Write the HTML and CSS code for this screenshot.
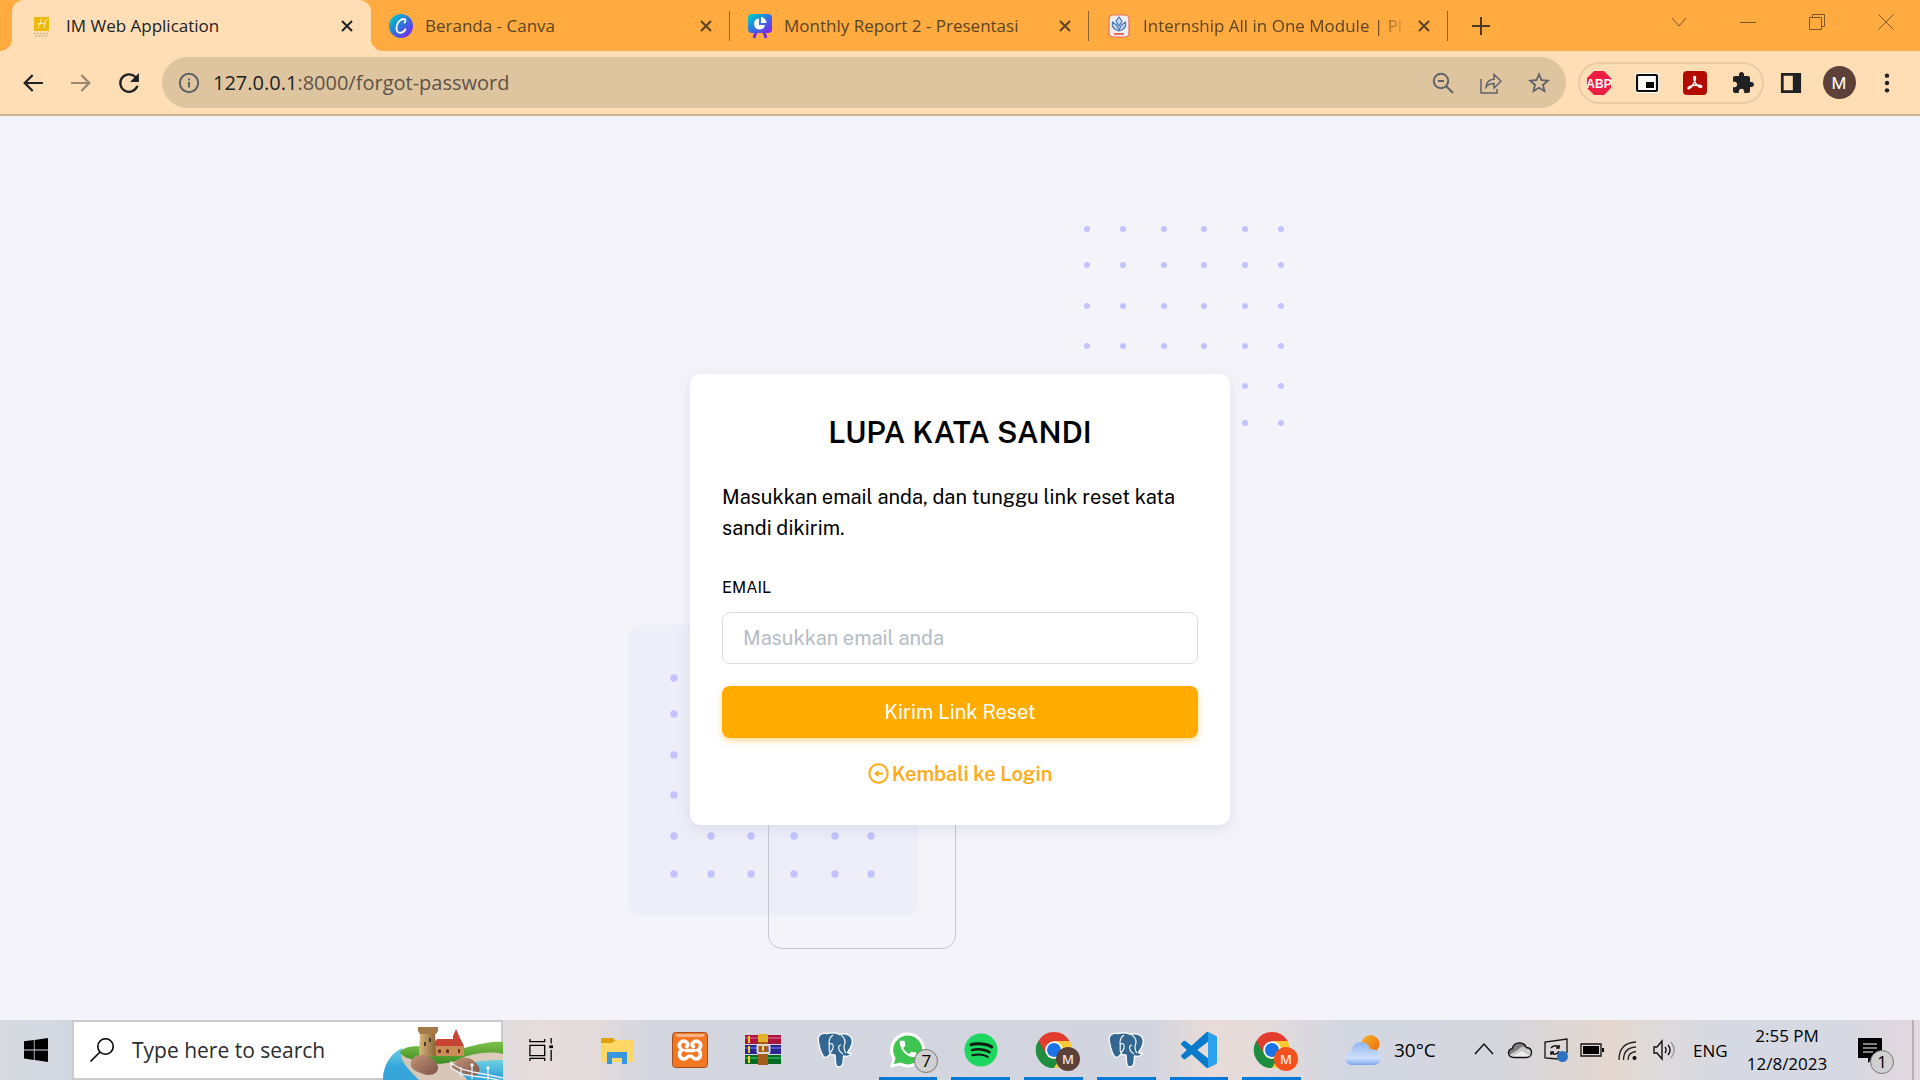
FILE: index.html
```html
<!DOCTYPE html>
<html lang="id">
<head>
<meta charset="utf-8">
<meta name="viewport" content="width=device-width, initial-scale=1">
<title>IM Web Application</title>
<link rel="stylesheet" href="styles.css">
</head>
<body>
<header class="browser">
  <div class="tabstrip">
    <div class="tab tab-active">
      <svg class="favicon" viewBox="0 0 24 24"><rect x="4" y="3" width="15" height="14" fill="#edb90b"/><path d="M8 14c2-3 3-6 3-9M14 14c0-3 1-7 3-9M7 10c3 0 6-1 9-1" fill="none" stroke="#fff0b8" stroke-width="1"/><path d="M4 19.500h15M5 22h13" stroke="#cdb994" stroke-width="1.500" stroke-dasharray="2 1"/></svg>
      <span class="tab-title">IM Web Application</span>
      <button class="tab-close" aria-label="Close"><svg viewBox="0 0 12 12"><path d="M1 1l10 10M11 1L1 11"/></svg></button>
    </div>
    <div class="tab tab-line">
      <svg class="favicon" viewBox="0 0 24 24"><defs><linearGradient id="cv" x1="0" y1="0" x2="1" y2="1"><stop offset=".1" stop-color="#00c4cc"/><stop offset=".5" stop-color="#2f73e0"/><stop offset=".9" stop-color="#7d2ae8"/></linearGradient></defs><circle cx="12" cy="12" r="12" fill="url(#cv)"/><path d="M15.500 8.700c1.600-1.500 1.300-3.700-.8-3.700C11 5 7.500 9.500 7.500 14c0 3 1.500 4.800 3.700 4.800 2.400 0 4.300-1.700 5.300-3.500" fill="none" stroke="#fff" stroke-width="1.800" stroke-linecap="round"/></svg>
      <span class="tab-title">Beranda - Canva</span>
      <button class="tab-close" aria-label="Close"><svg viewBox="0 0 12 12"><path d="M1 1l10 10M11 1L1 11"/></svg></button>
    </div>
    <div class="tab tab-line">
      <svg class="favicon" viewBox="0 0 24 24"><path d="M8 18l-2 6M16 18l2 6" stroke="#7d2ae8" stroke-width="3"/><rect width="24" height="19" rx="4" fill="url(#cv)"/><path d="M11 4.500a5.500 5.500 0 1 0 6 6.500h-6z" fill="#fff"/><path d="M13 3a6 6 0 0 1 5.500 6H13z" fill="#fff"/></svg>
      <span class="tab-title">Monthly Report 2 - Presentasi</span>
      <button class="tab-close" aria-label="Close"><svg viewBox="0 0 12 12"><path d="M1 1l10 10M11 1L1 11"/></svg></button>
    </div>
    <div class="tab tab-line">
      <svg class="favicon" viewBox="0 0 24 24"><rect x="2" y="1" width="20" height="22" rx="4" fill="#f5eef0" stroke="#ea6a5a" stroke-width="1.200"/><path d="M12 3l3 4-3 5-3-5zM5.500 8c-1 5 2 8 6.500 9 4.500-1 7.500-4 6.500-9l-4 3-2.500 5-2.500-5z" fill="#c4d7ee" stroke="#4d7cb8" stroke-width="1.200"/><path d="M7 20h10" stroke="#e0614f" stroke-width="1.800"/></svg>
      <span class="tab-title tab-fade">Internship All in One Module | Pl</span>
      <button class="tab-close" aria-label="Close"><svg viewBox="0 0 12 12"><path d="M1 1l10 10M11 1L1 11"/></svg></button>
    </div>
    <button class="tab-new" aria-label="New tab"><svg viewBox="0 0 18 18"><path d="M9 0v18M0 9h18"/></svg></button>
    <div class="window-controls">
      <button aria-label="Search tabs"><svg viewBox="0 0 16 16"><path d="M1 4l7 8 7-8"/></svg></button>
      <button aria-label="Minimize"><svg viewBox="0 0 16 16"><path d="M0 8.500h16"/></svg></button>
      <button aria-label="Restore"><svg viewBox="0 0 16 16"><path d="M.5 3.500h12v12H.5zM3.500 3.500v-3h12v12h-3"/></svg></button>
      <button aria-label="Close window"><svg viewBox="0 0 16 16"><path d="M.5.5l15 15M15.500.5l-15 15"/></svg></button>
    </div>
  </div>

  <nav class="toolbar">
    <button class="tool" aria-label="Back"><svg viewBox="2 2 20 20"><path d="M21 11H6.830l5.590-5.590L11 4l-8 8 8 8 1.410-1.410L6.830 13H21z" fill="#202124"/></svg></button>
    <button class="tool" aria-label="Forward"><svg viewBox="2 2 20 20"><path d="M3 11h14.170l-5.590-5.590L13 4l8 8-8 8-1.410-1.410L17.170 13H3z" fill="#9b8871"/></svg></button>
    <button class="tool" aria-label="Reload"><svg viewBox="2 2 20 20"><path d="M18.360 5.640A9 9 0 1 0 20.700 14.500h-2.200A6.900 6.900 0 1 1 16.900 7.100L13 11h8V3z" fill="#202124"/></svg></button>
    <div class="omnibox">
      <svg class="omni-info" viewBox="0 0 24 24"><circle cx="12" cy="12" r="10" fill="none" stroke="#5c5f63" stroke-width="2.200"/><path d="M12 11v6M12 7v2.200" stroke="#5c5f63" stroke-width="2.200"/></svg>
      <p class="omni-url"><span class="omni-host">127.0.0.1</span>:8000/forgot-password</p>
      <button class="tool" aria-label="Zoom"><svg viewBox="1 1 22 22"><g fill="none" stroke="#5f6368" stroke-width="2"><circle cx="10" cy="10" r="7.200"/><path d="M7 10h6M15 15l7 7"/></g></svg></button>
      <button class="tool" aria-label="Share"><svg viewBox="1 1 22 22"><path d="M2 8v14h16v-4M7 16c.5-5 3-7.500 8-7.800V3.500l7 6.800-7 6.700v-4.500c-3.500 0-6 1-8 3.500z" fill="none" stroke="#5f6368" stroke-width="1.500"/></svg></button>
      <button class="tool" aria-label="Bookmark"><svg viewBox="2 2 20 20"><path d="M22 9.240l-7.190-.62L12 2 9.190 8.630 2 9.240l5.460 4.730L5.820 21 12 17.270 18.180 21l-1.630-7.030zM12 15.400l-3.760 2.270 1-4.280-3.320-2.880 4.380-.38L12 6.100l1.710 4.040 4.380.38-3.320 2.880 1 4.280z" fill="#5f6368"/></svg></button>
    </div>
    <div class="extensions">
      <button class="ext" aria-label="Adblock"><svg viewBox="0 0 24 24"><path d="M7 0h10l7 7v10l-7 7H7l-7-7V7z" fill="#ee1d43"/><text x="12" y="16.500" class="ext-abp">ABP</text></svg></button>
      <button class="ext" aria-label="Picture in picture"><svg viewBox="0 0 24 24"><rect x="0" y="2" width="24" height="20" rx="3" fill="#fff"/><rect x="2" y="4" width="20" height="16" rx="1" fill="#fff" stroke="#0b0d0f" stroke-width="2.200"/><path d="M11 11h8v6h-8z" fill="#000"/></svg></button>
      <button class="ext" aria-label="PDF"><svg viewBox="0 0 24 24"><rect width="24" height="24" rx="4" fill="#b30b00"/><path d="M11.500 5.500c2 0 .8 5-1.800 8.500-2 2.800-4.200 4.600-4.700 3.500-.6-1.500 5-3.500 9-3.500 3.400 0 5 .8 4.700 1.800-.5 1.500-3.500-.3-5.200-2.300-2.500-3-3.500-8-2-8z" fill="none" stroke="#fff" stroke-width="1.500"/></svg></button>
      <button class="ext" aria-label="Extensions"><svg viewBox="0 0 24 24"><path d="M20.500 11H19V7c0-1.100-.9-2-2-2h-4V3.500C13 2.120 11.880 1 10.500 1S8 2.120 8 3.500V5H4c-1.100 0-1.990.9-1.990 2v3.800H3.500c1.490 0 2.700 1.210 2.700 2.700s-1.210 2.700-2.700 2.700H2V20c0 1.100.9 2 2 2h3.800v-1.500c0-1.490 1.210-2.700 2.700-2.700s2.700 1.210 2.700 2.700V22H17c1.100 0 2-.9 2-2v-4h1.500c1.380 0 2.500-1.120 2.500-2.500S21.880 11 20.500 11z" fill="#202124"/></svg></button>
    </div>
    <div class="toolbar-end">
      <button class="tool" aria-label="Side panel"><svg viewBox="0 0 24 24"><path d="M2.500 2.500h19v19h-19z" fill="none" stroke="#202124" stroke-width="3"/><path d="M14 2h8v20h-8z" fill="#202124"/></svg></button>
      <button class="tool" aria-label="Profile"><span class="avatar">M</span></button>
      <button class="tool" aria-label="Menu"><svg viewBox="0 0 24 24"><g fill="#202124"><circle cx="12" cy="4" r="2.400"/><circle cx="12" cy="12" r="2.400"/><circle cx="12" cy="20" r="2.400"/></g></svg></button>
    </div>
  </nav>
</header>

<main class="page">
  <div class="auth">
    <svg class="dots-top" viewBox="0 0 204 204"><defs><g id="row"><circle cx="5" cy="5" r="3"/><circle cx="41" cy="5" r="3"/><circle cx="82" cy="5" r="3"/><circle cx="122" cy="5" r="3"/><circle cx="163" cy="5" r="3"/><circle cx="199" cy="5" r="3"/></g></defs><g fill="#c3c2ff"><use href="#row"/><use href="#row" y="36"/><use href="#row" y="77"/><use href="#row" y="117"/><use href="#row" y="157"/><use href="#row" y="194"/></g></svg>
    <div class="shape-fill">
      <svg class="dots-bottom" viewBox="0 0 208 208"><defs><g id="row-lg"><circle cx="5" cy="5" r="3.700"/><circle cx="42" cy="5" r="3.700"/><circle cx="82" cy="5" r="3.700"/><circle cx="125" cy="5" r="3.700"/><circle cx="166" cy="5" r="3.700"/><circle cx="202" cy="5" r="3.700"/></g></defs><g fill="#c3c2ff"><use href="#row-lg"/><use href="#row-lg" y="36"/><use href="#row-lg" y="77"/><use href="#row-lg" y="117"/><use href="#row-lg" y="158"/><use href="#row-lg" y="196"/></g></svg>
    </div>
    <div class="shape-outline"></div>
    <form class="card">
      <h1 class="card-title">LUPA KATA SANDI</h1>
      <p class="card-text">Masukkan email anda, dan tunggu link reset kata sandi dikirim.</p>
      <label class="field-label" for="email">EMAIL</label>
      <input class="field" id="email" type="email" placeholder="Masukkan email anda">
      <button class="submit" type="button">Kirim Link Reset</button>
      <a class="back-link" href="#"><svg viewBox="0 0 24 24"><circle cx="12" cy="12" r="10.500" fill="none" stroke="#ffab1a" stroke-width="2.300"/><path d="M7 12l5-4v3h5v2h-5v3z" fill="#ffa500"/></svg>Kembali ke Login</a>
    </form>
  </div>
</main>

<footer class="taskbar">
  <button class="start" aria-label="Start"><svg viewBox="0 0 24 24"><path d="M0 3.300l9.800-1.300v9.500H0zM10.600 1.900L24 0v11.500H10.600zM0 12.400h9.800v9.500L0 20.600zM10.600 12.400H24V24l-13.400-1.900z"/></svg></button>
  <label class="search">
    <svg class="search-icon" viewBox="0 0 24 24"><g fill="none" stroke="#000" stroke-width="1.600"><circle cx="15.500" cy="8.500" r="7.700"/><path d="M10 14L.5 23.500"/></g></svg>
    <input class="search-input" type="text" placeholder="Type here to search">
    <svg class="search-art" viewBox="0 0 120 56">
      <defs>
        <linearGradient id="gr" x1="0" y1="0" x2="0" y2="1"><stop offset="0" stop-color="#7cc24a"/><stop offset="1" stop-color="#3f8a22"/></linearGradient>
        <linearGradient id="sea" x1="0" y1="0" x2="0" y2="1"><stop offset="0" stop-color="#6fd0e0"/><stop offset=".6" stop-color="#35a5da"/></linearGradient>
        <linearGradient id="tw" x1="0" y1="0" x2="1" y2="0"><stop offset="0" stop-color="#d9b87c"/><stop offset="1" stop-color="#8a6338"/></linearGradient>
        <linearGradient id="rk" x1="0" y1="0" x2="1" y2="1"><stop offset="0" stop-color="#c59478"/><stop offset="1" stop-color="#7c5448"/></linearGradient>
      </defs>
      <path d="M0 56C0 42 8 28 24 24h96v32z" fill="#d8c6b6"/>
      <path d="M0 56C0 42 8 28 20 24c-6 10 4 20 16 32z" fill="url(#sea)"/>
      <g transform="translate(0 7)">
        <path d="M17 21c6-7 20-7 38-3 14 3 22 0 34-3s22-5 31-4v12c-24-1-36 3-50 8-14 3-22 2-34-1-10-2-17-4-19-9z" fill="url(#gr)"/>
        <path d="M76 28c14-6 30-8 44-5v7c-14 0-26 2-38 2z" fill="#dccbbb"/>
        <path d="M74 36c14-6 30-7 46-7v27H90z" fill="url(#sea)"/>
        <path d="M50 15h31v10H50z" fill="#c98d56"/>
        <path d="M49 15l5-7h16v-3l3-7 4 9 4 8z" fill="#c94335"/>
        <path d="M55 22v-3a2 2 0 0 1 3 0v3zM63 22v-3a2 2 0 0 1 3 0v3zM75 22v-4h2v4z" fill="#6b3325"/>
        <path d="M37 2h15l1 23H36z" fill="url(#tw)"/><path d="M35-4h20v4l-2 3H37l-2-3z" fill="#a37a48"/><path d="M42 11v4M47 7v4" stroke="#4a3a30" stroke-width="2"/>
        <path d="M30 27c5-4 12-4 17-1 5 3 9 8 8 12-2 7-11 7-17 4-7-2-14-7-8-15z" fill="url(#rk)"/>
        <path d="M72 31c5-5 14-6 20 0 6 5 6 11 0 14-8 0-18-5-24-9z" fill="url(#rk)"/>
        <path d="M68 37l10 6 12 2 16 2 14 3M68 32l10 6 12 3 16 3 14 3M68 30v8M78 36v10M89 34v14M105 38v14" fill="none" stroke="#e7f1fa" stroke-width="1.300"/>
        <g fill="#e7f1fa"><circle cx="89" cy="34" r="1.700"/><circle cx="105" cy="37" r="1.700"/></g>
      </g>
    </svg>
  </label>
  <button class="taskview" aria-label="Task view"><svg viewBox="0 0 26 26"><path d="M1 1v3h16V1M1 25v-3h16v3M1 8h16v11H1zM24 0v6M24 13v12" fill="none" stroke="#000" stroke-width="1.400"/><path d="M22 8h4v3h-4z"/></svg></button>
  <div class="apps">
    <button class="app" aria-label="File Explorer"><svg viewBox="0 0 36 36"><path d="M2 6h12l3 3-2 5H2z" fill="#e0a011"/><path d="M2 11h11l4-3h17v22H2z" fill="#ffd767"/><path d="M8 32V20h20v12h-5v-6H13v6z" fill="#3996e0"/></svg></button>
    <button class="app" aria-label="XAMPP"><svg viewBox="0 0 36 36"><rect x=".5" y=".5" width="35" height="35" rx="3" fill="#f37623" stroke="#a94f1d"/><path d="M3 2h30l-2 3H5z" fill="#f7b48a"/><path d="M15 10.500C10 7 5 12 8.500 16.500c.6.800 1 1.200 1.500 1.500-4 2.500-3 9 2 9 3 0 3-3 6-3s3 3 6 3c5 0 6-6.500 2-9 .5-.3.900-.7 1.500-1.500C31 12 26 7 21 10.500c-1.500 1.500-1 3.500.5 4M15 10.500c1.500 1.500 1 3.500-.5 4M14 18.500h8" fill="none" stroke="#fff" stroke-width="3.600" stroke-linecap="round"/></svg></button>
    <button class="app" aria-label="WinRAR"><svg viewBox="0 0 36 36"><path d="M0 3h36v9H0z" fill="#a8163f"/><path d="M0 5h36v2H0z" fill="#d0406a"/><path d="M0 13h36v9H0z" fill="#29248f"/><path d="M0 15h36v2H0z" fill="#5555c8"/><path d="M0 23h36v9H0z" fill="#056b24"/><path d="M0 25h36v2H0z" fill="#1fa547"/><path d="M4 4v7M4 14v7M4 24v7" stroke="#f8d21c" stroke-width="2"/><path d="M13 2h10v31H13z" fill="#a65d1c"/><path d="M13 2h10v8H13z" fill="#deb22a"/><rect x="12.500" y="13" width="12" height="8" rx="1" fill="none" stroke="#dcdcd4" stroke-width="2"/><path d="M18 12v7" stroke="#f0d27c" stroke-width="2"/></svg></button>
    <button class="app" aria-label="pgAdmin"><svg viewBox="0 0 36 36"><g id="pg"><path d="M10 1.500C4 .5 0 3.500 1.500 10c1 7 4 15.500 7 15.500 2 0 3.500-2.500 4.500-3.500 2 1 4 1 5 1 1 4-1 12 3.500 12 5.500 0 4.500-6 5-11 3 1 6.500 0 8-2.500-2 0-3 0-4-1 3-4 6-10.500 4-14.500-2-4-8.500-5-12-3.500-3-2-8.500-2-12.500-1z" fill="#336791" stroke="#f5f8fb" stroke-width="1.400" stroke-linejoin="round"/><path d="M13 21c-2-3 0-6-1-10 0-3 1-6 4-8M24 3c4 3 5 7 3 11 0 3 0 5 2 7M24 13c-3 0-4 5 2 9M12 12c3-1 5 0 4 4-1 3-2 4-3 5" fill="none" stroke="#f5f8fb" stroke-width="1.200"/></g></svg></button>
    <button class="app app-open" aria-label="WhatsApp"><svg viewBox="0 0 36 36"><path d="M0 36l2.500-9A17.500 17.500 0 1 1 9.500 33.500z" fill="#fff"/><path d="M4 32l1.600-6A14.500 14.500 0 1 1 10.500 30.600z" fill="#3fc351"/><g transform="translate(7 6) scale(.92)"><path d="M6.620 10.790c1.440 2.830 3.760 5.140 6.590 6.590l2.200-2.200c.27-.27.67-.36 1.020-.24 1.120.37 2.330.57 3.570.57.55 0 1 .45 1 1V20c0 .55-.45 1-1 1-9.390 0-17-7.610-17-17 0-.55.45-1 1-1h3.500c.55 0 1 .45 1 1 0 1.250.2 2.450.57 3.570.11.35.03.74-.25 1.020z" fill="#fff"/></g></svg><span class="badge app-badge">7</span></button>
    <button class="app app-open" aria-label="Spotify"><svg viewBox="-1 -1 26 26"><path d="M12 0C5.400 0 0 5.400 0 12s5.400 12 12 12 12-5.400 12-12S18.660 0 12 0z" fill="#1ed760"/><path d="M17.521 17.340c-.24.359-.66.48-1.021.24-2.820-1.740-6.360-2.101-10.561-1.141-.418.122-.779-.179-.899-.539-.12-.421.18-.78.54-.9 4.560-1.021 8.520-.6 11.640 1.320.42.180.479.659.301 1.020zm1.440-3.300c-.301.42-.841.6-1.262.3-3.239-1.980-8.159-2.580-11.939-1.380-.479.12-1.020-.12-1.140-.6-.12-.48.12-1.021.6-1.141C9.600 9.900 15 10.561 18.720 12.840c.361.181.54.78.241 1.200zm.12-3.360C15.240 8.400 8.820 8.160 5.160 9.301c-.6.179-1.200-.181-1.380-.721-.18-.601.18-1.200.72-1.381 4.260-1.260 11.280-1.020 15.721 1.621.539.3.719 1.020.419 1.560-.299.421-1.020.599-1.559.3z" fill="#0d1a12"/></svg></button>
    <button class="app app-open" aria-label="Chrome"><svg viewBox="0 0 36 36"><g id="chrome"><path d="M18 18L2.400 9A18 18 0 0 1 33.600 9z" fill="#e33b2e"/><path d="M18 18L33.600 9A18 18 0 0 1 18 36z" fill="#fcc934"/><path d="M18 18l7.800 4.500L18 36A18 18 0 0 1 2.400 9z" fill="#1e8e3e"/><path d="M18 9h15.600L26 22z" fill="#fcc934"/><path d="M2.400 9L18 9v9l-7.800 4.500z" fill="#e33b2e"/><path d="M2.400 9l7.800 13.500L18 27v9A18 18 0 0 1 2.400 9z" fill="#1e8e3e"/><circle cx="18" cy="18" r="8.800" fill="#fff"/><circle cx="18" cy="18" r="7" fill="#1a73e8"/></g></svg><span class="badge profile-badge profile-brown">M</span></button>
    <button class="app app-open" aria-label="pgAdmin"><svg viewBox="0 0 36 36"><use href="#pg"/></svg></button>
    <button class="app app-open" aria-label="Visual Studio Code"><svg viewBox="0 0 24 24"><path d="M23.150 2.587L18.210.21a1.494 1.494 0 0 0-1.705.29l-9.460 8.630-4.120-3.128a.999.999 0 0 0-1.276.057L.327 7.261A1 1 0 0 0 .326 8.740L3.899 12 .326 15.260a1 1 0 0 0 .001 1.479L1.650 17.940a.999.999 0 0 0 1.276.057l4.120-3.128 9.460 8.630a1.492 1.492 0 0 0 1.704.29l4.942-2.377A1.500 1.500 0 0 0 24 20.060V3.939a1.500 1.500 0 0 0-.85-1.352zm-5.146 14.861L10.826 12l7.178-5.448z" fill="#0a7bcb"/><path d="M18 .15l5.150 2.437A1.500 1.500 0 0 1 24 3.940v16.120a1.500 1.500 0 0 1-.85 1.352L18 23.850z" fill="#2ba2ee"/></svg></button>
    <button class="app app-open" aria-label="Chrome"><svg viewBox="0 0 36 36"><use href="#chrome"/></svg><span class="badge profile-badge profile-orange">M</span></button>
  </div>
  <div class="tray">
    <div class="weather">
      <svg viewBox="0 0 36 30"><defs><linearGradient id="sun" x1="0" y1="0" x2="1" y2="1"><stop offset="0" stop-color="#f3b52e"/><stop offset="1" stop-color="#f0670c"/></linearGradient><linearGradient id="cl" x1="0" y1="0" x2="0" y2="1"><stop offset="0" stop-color="#8fb5f3"/><stop offset=".7" stop-color="#cfe0fb"/><stop offset="1" stop-color="#7ba5ee"/></linearGradient></defs><circle cx="25.500" cy="9" r="9" fill="url(#sun)"/><path d="M7 30a6.500 6.500 0 0 1-.5-13C7 10 11 7 16 7c5 0 8 3 9 7 6 0 11 3 11 9 0 4-3 7-7 7z" fill="url(#cl)"/></svg>
      <span>30°C</span>
    </div>
    <button class="tray-icon" aria-label="Show hidden icons"><svg viewBox="0 0 24 24"><path d="M3 16l9-10 9 10" fill="none" stroke="#111" stroke-width="1.500"/></svg></button>
    <button class="tray-icon" aria-label="OneDrive"><svg viewBox="0 0 24 24"><path d="M6 19.500C2.500 19.500.5 17.500.5 15c0-2.300 1.600-4 3.800-4.300C5 7 8 4.800 11.500 4.800c3 0 5.700 1.700 6.800 4.700 3 .2 5.200 2.200 5.200 5s-2 5-5 5z" fill="#c9c9c9"/><path d="M1 17c5-3 9-5 11-7 2-2 4-1 6-.5-1-3-3.500-4.700-6.500-4.700C8 4.800 5 7 4.300 10.700 1.500 11 .2 14 1 17z" fill="#7d7d7d"/><path d="M3 19l11-6 8 5-3 1.500H6z" fill="#eee"/><path d="M6 19.500C2.500 19.500.5 17.500.5 15c0-2.300 1.600-4 3.800-4.300C5 7 8 4.800 11.500 4.800c3 0 5.700 1.700 6.800 4.700 3 .2 5.200 2.200 5.200 5s-2 5-5 5z" fill="none" stroke="#111" stroke-width="1.300"/></svg></button>
    <button class="tray-icon" aria-label="Update"><svg viewBox="0 0 24 24"><path d="M14 21L1 20V4l22-3v14" fill="none" stroke="#111" stroke-width="1.300"/><path d="M7 10c2-3 7-3 8 0M15 7v3h-3M15 13c-2 4-6 4-8 1M7 17v-3h3" fill="none" stroke="#111" stroke-width="1.500"/><circle cx="18.500" cy="18.500" r="5.500" fill="#2b72c0"/></svg></button>
    <button class="tray-icon" aria-label="Battery"><svg viewBox="0 0 24 24"><path d="M1 6h20v12H1z" fill="none" stroke="#111" stroke-width="1.300"/><path d="M3 8h16v8H3zM22 10h2v4h-2z"/></svg></button>
    <button class="tray-icon" aria-label="Wi-Fi"><svg viewBox="0 0 24 24"><g fill="none" stroke="#222" stroke-width="1.300"><path d="M3 22C3 11 9 4.500 20 4M7.500 22C7.500 14 12 9.500 20 9M12 22c0-5 3-8 8-8.500"/></g><circle cx="18.500" cy="20" r="2"/></svg></button>
    <button class="tray-icon" aria-label="Volume"><svg viewBox="0 0 24 24"><g fill="none" stroke="#111" stroke-width="1.400"><path d="M2 9h3l5-6v18l-5-6H2zM13 9c1.500 2 1.500 4 0 6M16 7c2.500 3 2.500 7 0 10"/><path d="M19 4c4 5 4 11 0 16" stroke="#999"/></g></svg></button>
    <span class="lang">ENG</span>
    <time class="clock"><span>2:55 PM</span><span>12/8/2023</span></time>
    <button class="notify" aria-label="Notifications"><svg viewBox="0 0 24 24"><path d="M0 0h24v20h-9l-5 5v-5H0z"/><path d="M5 6h14M5 10h14M5 14h10" stroke="#fff" stroke-width="1.200"/></svg><span class="badge notify-badge">1</span></button>
    <div class="desktop-edge"></div>
  </div>
</footer>
</body>
</html>
```

FILE: styles.css
```css
* { box-sizing: border-box; }

body {
  margin: 0;
  min-height: 100vh;
  display: flex;
  flex-direction: column;
  background: #f4f3f9;
  font-family: "Open Sans", "Noto Sans", sans-serif;
  color: #000;
}

button {
  border: 0;
  padding: 0;
  background: none;
  font: inherit;
  color: inherit;
}

svg { display: block; flex: none; overflow: visible; }
p, h1 { margin: 0; }

/* Browser tabs */
.tabstrip {
  display: flex;
  height: 51px;
  padding-left: 12px;
  background: #ffab40;
}

.tab {
  position: relative;
  flex: 0 1 359px;
  min-width: 0;
  display: flex;
  align-items: center;
  gap: 12px;
  padding: 0 12px 0 18px;
  font-size: 17px;
  color: #5c4424;
}

.tab-active {
  border-radius: 12px 12px 0 0;
  background: #ffdeb5;
  color: #202124;
}

.tab-active::before,
.tab-active::after {
  content: "";
  position: absolute;
  bottom: 0;
  width: 12px;
  height: 12px;
}
.tab-active::before { right: 100%; background: radial-gradient(circle at 0 0, #ffab40 12px, #ffdeb5 12px); }
.tab-active::after { left: 100%; background: radial-gradient(circle at 100% 0, #ffab40 12px, #ffdeb5 12px); }

.tab-line::after {
  content: "";
  position: absolute;
  right: 0;
  top: 11px;
  width: 1px;
  height: 30px;
  background: #8a6330;
}

.favicon { width: 24px; height: 24px; }

.tab-title {
  flex: 1;
  min-width: 0;
  overflow: hidden;
  white-space: nowrap;
}
.tab-fade {
  margin-right: -8px;
  -webkit-mask-image: linear-gradient(to right, #000 88%, transparent);
  mask-image: linear-gradient(to right, #000 88%, transparent);
}

.tab-close { width: 24px; height: 24px; display: grid; place-items: center; }
.tab-close svg { width: 12px; height: 12px; }
.tab-close path, .tab-new path { fill: none; stroke: currentColor; stroke-width: 2; }
.tab-new { width: 66px; display: grid; place-items: center; color: #4d3a20; }
.tab-new svg { width: 18px; height: 18px; }

.window-controls { display: flex; height: 43px; margin-left: auto; }
.window-controls button { width: 69px; display: grid; place-items: center; }
.window-controls svg { width: 16px; height: 16px; }
.window-controls path { fill: none; stroke: #80572a; stroke-width: 1; }

/* Address bar */
.toolbar {
  display: flex;
  align-items: center;
  height: 65px;
  padding: 0 9px;
  border-bottom: 2px solid #ccb292;
  background: #ffdeb5;
}

.tool { flex: none; width: 48px; height: 48px; display: grid; place-items: center; }
.tool svg { width: 22px; height: 22px; }

.omnibox {
  flex: 1;
  display: flex;
  align-items: center;
  height: 51px;
  margin: 0 12px 0 9px;
  padding: 0 3px 0 16px;
  border-radius: 26px;
  background: #dfc4a0;
}
.omni-info { width: 22px; height: 22px; }
.omni-url { flex: 1; padding-left: 13px; font-size: 20px; color: #5c5348; }
.omni-host { color: #202124; }

.extensions {
  display: flex;
  gap: 24px;
  height: 42px;
  padding: 0 7px;
  margin-right: 3px;
  border: 2px solid #e8cba5;
  border-radius: 21px;
}
.ext { width: 24px; display: grid; place-items: center; }
.ext svg { width: 24px; height: 24px; }
.ext-abp { font: 700 12px "Liberation Sans", sans-serif; fill: #fff; text-anchor: middle; }

.toolbar-end { display: flex; }
.avatar {
  width: 33px;
  height: 33px;
  display: grid;
  place-items: center;
  border-radius: 50%;
  background: #5d4037;
  color: #fff;
  font: 17px Roboto, sans-serif;
}

/* Page */
.page {
  flex: 1;
  display: grid;
  place-items: center;
  padding-top: 62px;
  overflow: hidden;
  font-family: "Public Sans", Inter, sans-serif;
}

.auth { position: relative; width: 100%; max-width: 540px; }

.dots-top { position: absolute; right: -56px; top: -150px; width: 204px; height: 204px; }

.shape-fill {
  position: absolute;
  left: -62px;
  bottom: -91px;
  width: 290px;
  height: 291px;
  padding: 48px 41px;
  border-radius: 12px;
  background: #eeeef9;
}
.dots-bottom { width: 208px; height: 208px; }

.shape-outline {
  position: absolute;
  left: 78px;
  bottom: -124px;
  width: 188px;
  height: 188px;
  border: 1px solid #c4c8d2;
  border-radius: 14px;
}

.card {
  position: relative;
  display: flex;
  flex-direction: column;
  padding: 40px 32px 37px;
  border-radius: 10px;
  background: #fff;
  box-shadow: 0 4px 14px rgba(80, 90, 140, 0.12);
}

.card-title { text-align: center; font-size: 30px; line-height: 36px; font-weight: 600; }
.card-text { margin-top: 32px; font-size: 20px; line-height: 31px; }
.field-label { margin-top: 32px; font-size: 16px; line-height: 24px; }

.field {
  width: 100%;
  height: 52px;
  margin-top: 12px;
  padding: 0 20px;
  border: 1px solid #d9dee3;
  border-radius: 8px;
  background: #fff;
  font: 20px "Public Sans", Inter, sans-serif;
}
.field::placeholder { color: #b4bdc6; }

.submit {
  height: 52px;
  margin-top: 22px;
  border-radius: 8px;
  background: #ffab00;
  box-shadow: 0 3px 6px rgba(255, 171, 0, 0.4);
  color: #fff;
  font-size: 20px;
}

.back-link {
  align-self: center;
  display: flex;
  align-items: center;
  gap: 3px;
  margin-top: 22px;
  color: #ffab1a;
  font-size: 20px;
  line-height: 28px;
  font-weight: 600;
  text-decoration: none;
}
.back-link svg { width: 21px; height: 21px; }

/* Taskbar */
.taskbar {
  display: flex;
  height: 60px;
  background: linear-gradient(90deg, #d8dae0 0, #d1d7e2 4%, #d5d9e2 24%, #e6dcdb 28%, #e2dadb 31%, #d4d7df 34%, #d2d5df 60%, #e8dbd8 63%, #e6dbd9 65%, #d3d7e2 70%, #d4d6dc 78%, #e5d7cf 84%, #dedad9 86%, #d6d9e3 90%, #d6d8e2 96%, #e2d8dd 100%);
}

.start { width: 72px; display: grid; place-items: center; }
.start svg { width: 24px; height: 24px; }

.search {
  position: relative;
  display: flex;
  align-items: center;
  width: 431px;
  padding-left: 16px;
  border: 2px solid #cacaca;
  background: #fff;
}
.search-icon { width: 24px; height: 24px; }
.search-input {
  flex: 1;
  min-width: 0;
  margin: 0 0 0 18px;
  padding: 0;
  border: 0;
  outline: 0;
  background: none;
  font: 21px "Open Sans", sans-serif;
}
.search-input::placeholder { color: #2b2b2b; }
.search-art { position: absolute; right: -2px; bottom: -2px; width: 120px; height: 56px; overflow: hidden; }

.taskview { width: 76px; display: grid; place-items: center; }
.taskview svg { width: 24px; height: 26px; }

.apps { display: grid; grid-template-columns: repeat(10, 1fr); width: 727px; margin-left: 2px; }
.app { position: relative; display: grid; place-items: center; }
.app svg { width: 36px; height: 36px; }
.app-open::after {
  content: "";
  position: absolute;
  left: 7px;
  right: 7px;
  bottom: 0;
  height: 3px;
  background: #0078d7;
}

.badge {
  position: absolute;
  width: 24px;
  height: 24px;
  display: grid;
  place-items: center;
  border-radius: 50%;
  border: 1px solid #777;
  background: #d0d0d0;
  font-size: 17px;
  line-height: 22px;
}
.app-badge { right: 6px; bottom: 7px; }
.profile-badge { right: 10px; bottom: 9px; border: 0; color: #f0e4e0; font-size: 13px; font-weight: 600; }
.profile-brown { background: #5d4037; }
.profile-orange { background: #f4511e; }

.tray { display: flex; align-items: stretch; margin-left: auto; }
.weather { display: flex; align-items: center; gap: 13px; width: 121px; font-size: 19px; }
.weather svg { width: 36px; height: 30px; }
.tray-icon { width: 36px; display: grid; place-items: center; }
.tray-icon svg { width: 24px; height: 24px; }
.lang { width: 64px; padding-left: 11px; align-self: center; font-size: 17px; }
.clock {
  width: 82px;
  display: flex;
  flex-direction: column;
  align-items: center;
  justify-content: center;
  font-size: 17px;
  line-height: 28px;
}
.notify { position: relative; width: 84px; display: grid; place-items: center; }
.notify svg { width: 24px; height: 24px; }
.notify-badge { right: 18px; bottom: 6px; }
.desktop-edge { width: 8px; border-left: 2px solid #b3b0b8; }
```
